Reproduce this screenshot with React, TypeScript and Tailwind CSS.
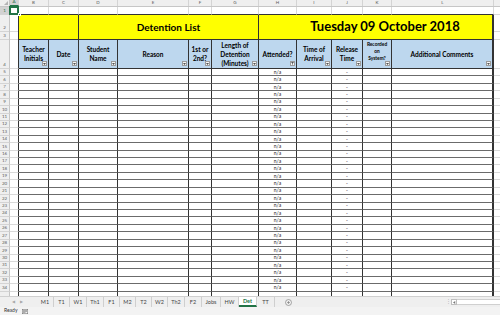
const LETTERS = [
  { id: "A", w: "w-[9px]" },
  { id: "B", w: "w-[30px]" },
  { id: "C", w: "w-[30px]" },
  { id: "D", w: "w-[39px]" },
  { id: "E", w: "w-[71px]" },
  { id: "F", w: "w-[23px]" },
  { id: "G", w: "w-[47px]" },
  { id: "H", w: "w-[38px]" },
  { id: "I", w: "w-[35px]" },
  { id: "J", w: "w-[31px]" },
  { id: "K", w: "w-[29px]" },
  { id: "L", w: "w-[102px]" },
];

const HEADS = [
  { w: "w-[30px]", lines: ["Teacher", "Initials"] },
  { w: "w-[30px]", lines: ["Date"] },
  { w: "w-[39px]", lines: ["Student", "Name"] },
  { w: "w-[71px]", lines: ["Reason"] },
  { w: "w-[23px]", lines: ["1st or", "2nd?"] },
  { w: "w-[47px]", lines: ["Length of", "Detention", "(Minutes)"] },
  { w: "w-[38px]", lines: ["Attended?"], filtered: true },
  { w: "w-[35px]", lines: ["Time of", "Arrival"] },
  { w: "w-[31px]", lines: ["Release", "Time"] },
  { w: "w-[29px]", lines: ["Recorded", "on", "System?"], small: true },
  { w: "w-[102px]", lines: ["Additional Comments"] },
];

const TABS = [
  { name: "M1", w: "w-[17px]" },
  { name: "T1", w: "w-[16px]" },
  { name: "W1", w: "w-[17px]" },
  { name: "Th1", w: "w-[17px]" },
  { name: "F1", w: "w-[16px]" },
  { name: "M2", w: "w-[16px]" },
  { name: "T2", w: "w-[16px]" },
  { name: "W2", w: "w-[16px]" },
  { name: "Th2", w: "w-[17px]" },
  { name: "F2", w: "w-[17px]" },
  { name: "Jobs", w: "w-[19px]" },
  { name: "HW", w: "w-[18px]" },
  { name: "Det", w: "w-[18px]" },
  { name: "TT", w: "w-[18px]" },
];

function RowNum({ n, active }: { n?: number; active?: boolean }) {
  return (
    <div
      className={`w-[10px] shrink-0 flex items-end justify-center text-[4.5px] leading-[6px] border-b border-[#d4d4d4] ${
        active
          ? "bg-[#d2d2d2] text-[#217346] border-r border-r-[#217346]"
          : "bg-[#efefef] text-[#5b5b5b] border-r border-r-[#c6c6c6]"
      }`}
    >
      {n}
    </div>
  );
}

function FilterBtn({ filtered }: { filtered?: boolean }) {
  return (
    <div className="absolute right-[1px] bottom-[2px] w-[5px] h-[5px] bg-[#f6f6f6] border border-[#9c9c9c] flex items-center justify-center">
      {filtered ? (
        <svg width="3" height="3" viewBox="0 0 6 6">
          <path d="M0 0h6L3.6 3v3L2.4 5V3z" fill="#555" />
        </svg>
      ) : (
        <svg width="3" height="2" viewBox="0 0 6 4">
          <path d="M0 0h6L3 4z" fill="#555" />
        </svg>
      )}
    </div>
  );
}

function DataRow({ n, blank }: { n?: number; blank?: boolean }) {
  return (
    <div className="flex h-[7.43px] shrink-0">
      <RowNum n={n} />
      <div className="w-[9px] shrink-0 border-r border-r-[#333] border-b border-b-[#d9d9d9]" />
      {LETTERS.slice(1).map((c) => (
        <div
          key={c.id}
          className={`${c.w} shrink-0 border-b border-b-[#6b6b6b] ${
            c.id === "L" ? "border-r-2" : "border-r"
          } border-r-[#333] flex items-center justify-center text-[5px] leading-none text-[#222]`}
        >
          {blank ? "" : c.id === "H" ? "n/a" : c.id === "J" ? "-" : ""}
        </div>
      ))}
      <div className="flex-1 border-b border-[#d9d9d9]" />
    </div>
  );
}

export default function App() {
  const rows = Array.from({ length: 30 }, (_, i) => i + 5);

  return (
    <div className="w-[500px] h-[315px] overflow-hidden bg-white flex flex-col font-['Lato','Liberation_Sans',sans-serif] text-black">
      {/* Grid */}
      <div className="h-[296px] shrink-0 flex flex-col overflow-hidden">
        {/* Column letters */}
        <div className="flex h-[7px] shrink-0 bg-[#efefef] border-b border-[#c6c6c6]">
          <div className="w-[10px] shrink-0 border-r border-[#c6c6c6] relative">
            <div className="absolute right-[1px] bottom-[1px] w-0 h-0 border-l-[4px] border-l-transparent border-b-[4px] border-b-[#b4b4b4]" />
          </div>
          {LETTERS.map((c) => (
            <div
              key={c.id}
              className={`${c.w} shrink-0 flex items-center justify-center text-[4.5px] leading-none border-r border-[#d4d4d4] ${
                c.id === "A" ? "bg-[#d2d2d2] text-[#217346] border-b border-b-[#217346]" : "text-[#5b5b5b]"
              }`}
            >
              {c.id}
            </div>
          ))}
          <div className="flex-1" />
        </div>

        {/* Row 1 */}
        <div className="flex h-[8px] shrink-0">
          <RowNum n={1} active />
          <div className="w-[9px] shrink-0 relative border-b border-[#d9d9d9]">
            <div className="absolute -left-[1px] -top-[1px] w-[10px] h-[9px] border-2 border-[#217346]" />
            <div className="absolute -right-[2px] -bottom-[2px] w-[3px] h-[3px] bg-[#217346] border border-white" />
          </div>
          {LETTERS.slice(1).map((c) => (
            <div key={c.id} className={`${c.w} shrink-0 border-r border-r-[#d9d9d9] border-b border-b-[#333]`} />
          ))}
          <div className="flex-1 border-b border-[#d9d9d9]" />
        </div>

        {/* Rows 2-3 title */}
        <div className="flex h-[25px] shrink-0">
          <div className="w-[10px] shrink-0 flex flex-col bg-[#efefef] text-[#5b5b5b] text-[4.5px] leading-[6px] border-r border-[#c6c6c6]">
            <div className="h-[17px] flex items-end justify-center border-b border-[#d4d4d4]">2</div>
            <div className="flex-1 flex items-end justify-center border-b border-[#d4d4d4]">3</div>
          </div>
          <div className="w-[9px] shrink-0 flex flex-col border-r border-[#333]">
            <div className="h-[17px] border-b border-[#d9d9d9]" />
            <div className="flex-1 border-b border-[#d9d9d9]" />
          </div>
          <div className="w-[60px] shrink-0 bg-[#ffff00] border-r border-b border-[#333]" />
          <div className="w-[180px] shrink-0 bg-[#ffff00] border-r border-b border-[#333] flex items-center justify-center font-bold text-[10px]">
            Detention List
          </div>
          <div className="w-[235px] shrink-0 bg-[#ffff00] border-r-2 border-b border-[#333] flex items-center justify-center pl-[19px] font-bold text-[13px]">
            Tuesday 09 October 2018
          </div>
          <div className="flex-1 flex flex-col">
            <div className="h-[17px] border-b border-[#d9d9d9]" />
            <div className="flex-1 border-b border-[#d9d9d9]" />
          </div>
        </div>

        {/* Row 4 headers */}
        <div className="flex h-[29px] shrink-0">
          <RowNum n={4} />
          <div className="w-[9px] shrink-0 border-r border-r-[#333] border-b border-b-[#d9d9d9]" />
          {HEADS.map((h, i) => (
            <div
              key={i}
              className={`${h.w} shrink-0 relative bg-[#bdd7ee] border-b border-b-[#333] ${
                i === HEADS.length - 1 ? "border-r-2" : "border-r"
              } border-r-[#333] flex flex-col items-center justify-center font-bold text-center ${
                h.small ? "text-[4.8px] leading-[7px] pb-[5px]" : "text-[6.5px] leading-[9px]"
              }`}
            >
              {h.lines.map((l) => (
                <span key={l} className="whitespace-nowrap">
                  {l}
                </span>
              ))}
              <FilterBtn filtered={h.filtered} />
            </div>
          ))}
          <div className="flex-1 border-b border-[#d9d9d9]" />
        </div>

        {/* Data rows */}
        {rows.map((n) => (
          <DataRow key={n} n={n} />
        ))}
        <DataRow blank />
      </div>

      {/* Sheet tabs */}
      <div className="h-[11px] shrink-0 flex items-stretch bg-[#efefef] border-t border-[#d0d0d0] text-[5.5px] text-[#444]">
        <div className="w-[37px] shrink-0 flex items-center pl-[12px] gap-[5px] text-[#a8a8a8] text-[4px]">
          <span>◀</span>
          <span>▶</span>
        </div>
        {TABS.map((t) => (
          <div
            key={t.name}
            className={`${t.w} shrink-0 flex items-center justify-center border-r border-[#cfcfcf] ${
              t.name === "Det" ? "bg-white text-[#217346] font-bold border-b-2 border-b-[#217346]" : ""
            }`}
          >
            {t.name}
          </div>
        ))}
        <div className="w-[26px] shrink-0 flex items-center justify-center">
          <svg width="7" height="7" viewBox="0 0 14 14">
            <circle cx="7" cy="7" r="6" fill="none" stroke="#777" strokeWidth="1.2" />
            <path d="M7 4v6M4 7h6" stroke="#777" strokeWidth="1.2" />
          </svg>
        </div>
        <div className="flex-1" />
        <div className="w-[6px] shrink-0 flex items-center justify-center text-[#b0b0b0] text-[5px]">⋮</div>
        <div className="w-[49px] shrink-0 flex items-center py-[2px]">
          <div className="w-[6px] h-[6px] border border-[#bdbdbd] bg-white flex items-center justify-center">
            <svg width="3" height="3" viewBox="0 0 4 4">
              <path d="M3 0v4L0 2z" fill="#777" />
            </svg>
          </div>
          <div className="flex-1 h-[6px] bg-white border-y border-[#d0d0d0]" />
        </div>
      </div>

      {/* Status bar */}
      <div className="h-[8px] shrink-0 flex items-center bg-[#f3f3f3] text-[5px] text-[#333] pl-[4px] gap-[5px]">
        <span>Ready</span>
        <svg width="6" height="5" viewBox="0 0 12 10">
          <rect x="0.5" y="0.5" width="11" height="9" fill="none" stroke="#666" />
          <path d="M2 3h8M2 5h8M2 7h5" stroke="#666" />
        </svg>
      </div>
    </div>
  );
}
